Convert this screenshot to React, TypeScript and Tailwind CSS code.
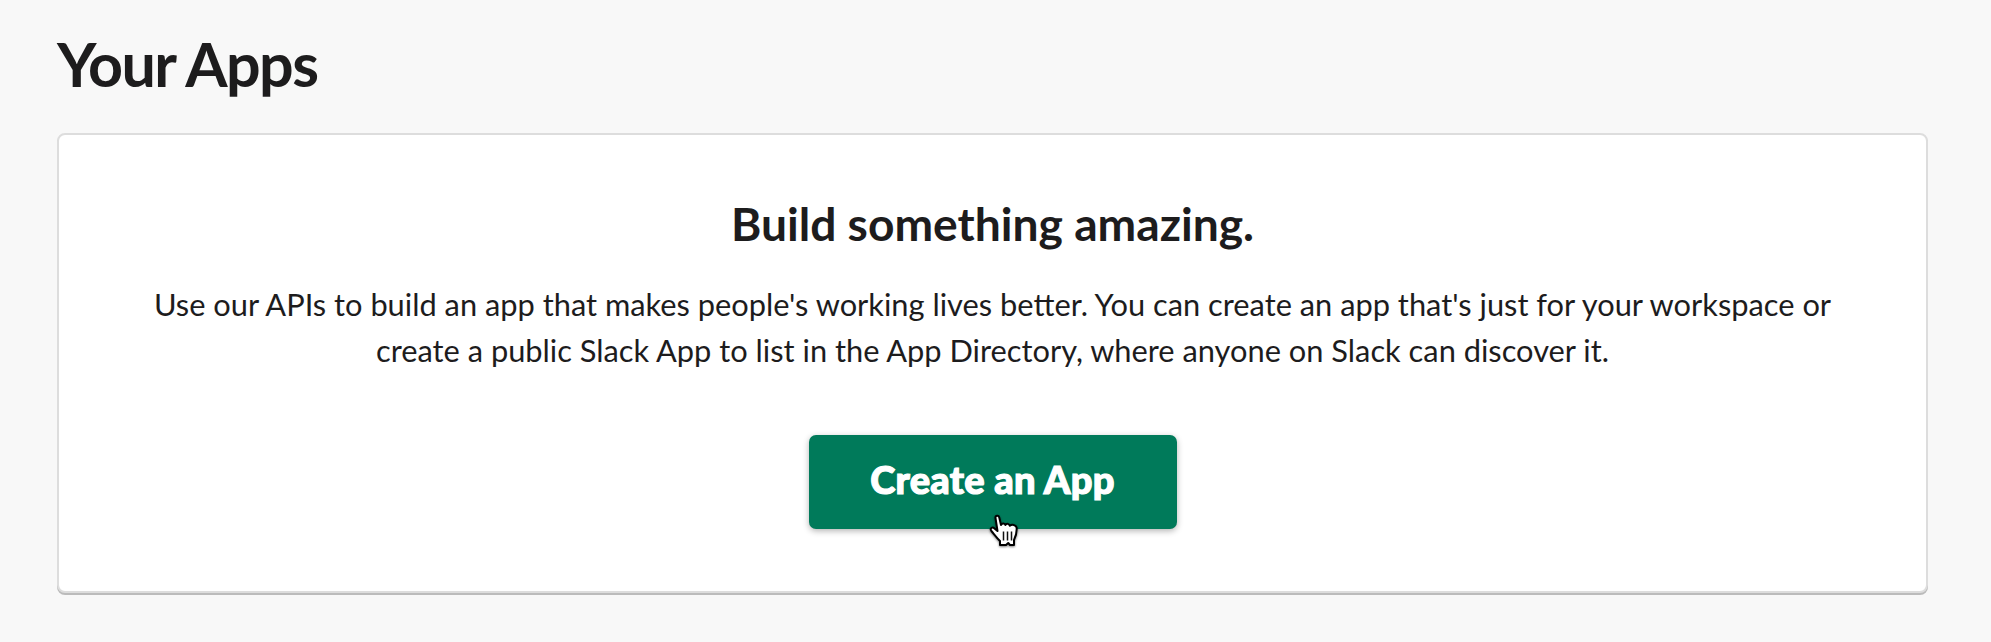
export default function App() {
  return (
    <main className="h-[642px] w-full bg-[#f8f8f8] pt-[31px] pr-[63px] pl-[57px] font-['Lato',sans-serif] text-[#1d1c1d]">
      <h1 className="h-[102px] text-[61px] leading-[66px] font-bold tracking-[-1.6px]">Your Apps</h1>
      <section className="flex h-[460px] flex-col items-center rounded-[8px] border-2 border-[#dddddd] bg-white pt-[58px] text-center shadow-[0_2px_0_#bbbbbb]">
        <h2 className="text-[46.2px] leading-[60px] font-bold">Build something amazing.</h2>
        <p className="mt-[29px] text-[30.8px] leading-[46px] whitespace-nowrap">
          Use our APIs to build an app that makes people's working lives better. You can create an app that's just for your workspace or
          <br />
          create a public Slack App to list in the App Directory, where anyone on Slack can discover it.
        </p>
        <button className="relative mt-[61px] h-[94px] w-[368px] rounded-[7px] bg-[#007a5a] pb-[5px] text-[38px] font-black tracking-[0.3px] text-white shadow-[0_2px_6px_rgba(0,0,0,0.3)] [-webkit-text-stroke:1.2px_white]">
          Create an App
          <svg
            className="absolute top-[79px] left-[180px] h-[36px] w-[31px] drop-shadow-[0_1px_1px_rgba(0,0,0,0.5)]"
            viewBox="0 0 31 36"
            aria-hidden="true"
          >
            <path
              d="M6.5 4C6 1.5 9.5 .8 10.2 3.2L12 11C13 8.8 16 9.2 16.4 11C17.7 9 20.3 9.7 20.8 11.8C22.8 10.1 27 10.6 27.6 13.5C28 18.5 27 22 25 26V31H21L19.2 29L17 31H11V27C8 24 5.2 20.3 2.4 17C.5 14.5 3.3 12.5 5.5 14.4L8.5 17Z"
              fill="#fff"
              stroke="#000"
              strokeWidth="2"
              strokeLinejoin="round"
            />
            <path d="M14.5 17.5V26.5M18.5 17.5V26.5M22.5 17.5V26.5" stroke="#111" strokeWidth="1.5" />
          </svg>
        </button>
      </section>
    </main>
  );
}
